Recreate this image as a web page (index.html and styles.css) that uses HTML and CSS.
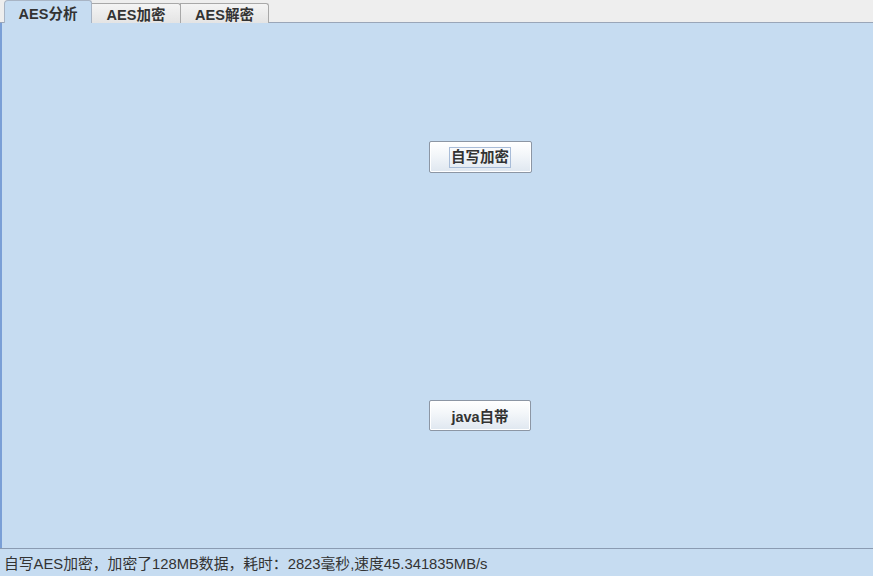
FILE: index.html
```html
<!DOCTYPE html>
<html>
<head>
<meta charset="utf-8">
<link rel="stylesheet" href="styles.css">
</head>
<body>
<div class="app">
  <div class="tabbar">
    <div class="tab selected">AES分析</div>
    <div class="tab">AES加密</div>
    <div class="tab">AES解密</div>
  </div>
  <div class="panel">
    <div class="row row1">
      <button class="btn btn1"><span class="focus">自写加密</span></button>
    </div>
    <div class="row row2">
      <button class="btn btn2">java自带</button>
    </div>
  </div>
  <div class="status">自写AES加密，加密了128MB数据，耗时：2823毫秒,速度45.341835MB/s</div>
</div>
</body>
</html>
```
FILE: styles.css
```css
html, body {
  margin: 0;
  padding: 0;
  background: #ffffff;
}
.app {
  width: 873px;
  height: 576px;
  display: flex;
  flex-direction: column;
  font-family: "Liberation Sans", "Noto Sans CJK SC", sans-serif;
  background: #c6dcf1;
}
.tabbar {
  height: 23px;
  background: #eeeeee;
  border-bottom: 1px solid #9aa6b8;
  display: flex;
  align-items: flex-end;
  padding-left: 4px;
  box-sizing: border-box;
  flex: none;
}
.tab {
  height: 20px;
  box-sizing: border-box;
  border: 1px solid #a8a8a8;
  border-bottom: none;
  border-left: none;
  border-radius: 0 3px 0 0;
  background: linear-gradient(#f4f4f4, #e4e4e4);
  font-size: 14.5px;
  font-weight: bold;
  color: #333333;
  display: flex;
  align-items: center;
  justify-content: center;
  width: 89px;
  margin-bottom: -1px;
}
.tab.selected {
  height: 23px;
  width: 88px;
  background: #c6dcf1;
  border-left: 1px solid #a8a8a8;
  border-color: #a8b4c4;
  border-radius: 4px 3px 0 0;
  margin-bottom: -1px;
  position: relative;
  z-index: 1;
}
.tab:not(.selected) {
  border-left: 1px solid #a8a8a8;
  margin-left: -1px;
}
.tab:nth-child(2) { width: 90px; }
.tab:nth-child(3) { width: 89px; }
.panel {
  flex: 1;
  background: #c6dcf1;
  border-left: 2px solid #7a9fd6;
  display: flex;
  flex-direction: column;
  position: relative;
}
.row {
  display: flex;
  justify-content: center;
  padding-left: 85px;
}
.row1 { margin-top: 118px; }
.row2 { margin-top: 227px; }
.btn {
  font-family: "Liberation Sans", "Noto Sans CJK SC", sans-serif;
  font-size: 14.5px;
  font-weight: bold;
  color: #333333;
  height: 32px;
  width: 103px;
  border: 1px solid #8c96a4;
  border-radius: 2px;
  background: linear-gradient(#ffffff 0%, #f4f7fa 40%, #dfe7f0 100%);
  box-shadow: inset 0 0 0 1px #ffffff;
  padding: 0;
  display: flex;
  align-items: center;
  justify-content: center;
}
.btn2 {
  width: 102px;
  height: 31px;
}
.focus {
  border: 1px solid #a8bcd8;
  padding: 1px 1px;
  line-height: 17px;
}
.status {
  height: 28px;
  border-top: 1px solid #8a9bb2;
  box-sizing: border-box;
  background: #c6dcf1;
  font-size: 14.8px;
  color: #333333;
  padding-left: 4px;
  padding-top: 3px;
  line-height: 24px;
  flex: none;
}
```
